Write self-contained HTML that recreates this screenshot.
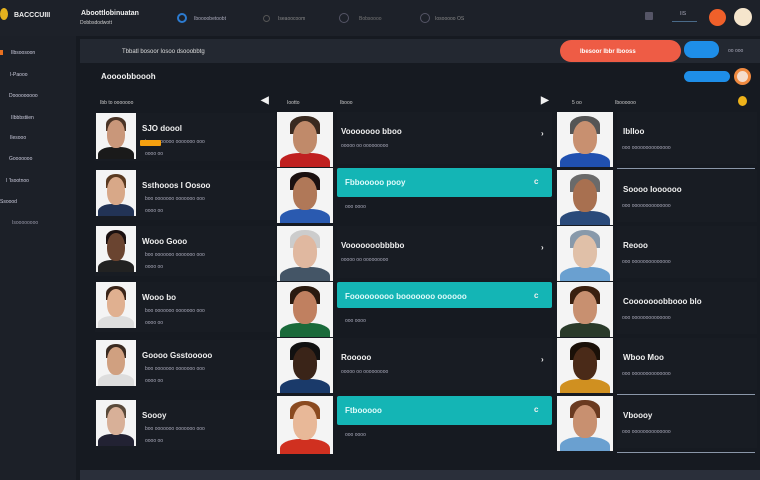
<!DOCTYPE html>
<html><head><style>
*{margin:0;padding:0;box-sizing:border-box}
body{width:760px;height:480px;overflow:hidden;background:#161a21;font-family:"Liberation Sans",sans-serif;color:#e8ecf0;position:relative}
.a{position:absolute}
.t{position:absolute;font-size:8px;font-weight:bold;color:#f0f0f0;white-space:nowrap}
.s{position:absolute;font-size:5px;color:#aab;white-space:nowrap}
.ph{position:absolute;background:#f4f4f4;overflow:hidden}
.ph .h{position:absolute;border-radius:50% 50% 45% 45%;background:#c9977a}
.ph .hr{position:absolute;border-radius:50% 50% 0 0;background:#4a3426}
.ph .b{position:absolute;border-radius:40% 40% 0 0}
.row{position:absolute;background:#181c23}
.teal{position:absolute;background:#14b5b5;border-radius:2px}
</style></head><body>
<div class="a" style="left:0;top:0;width:760px;height:36px;background:#1d2129"></div>
<div class="a" style="left:0;top:8px;width:8px;height:12px;border-radius:50%;background:#e5b21e"></div>
<div class="t" style="left:14px;top:12px;font-size:7px">BACCCUIII</div>
<div class="t" style="left:81px;top:10px;font-size:7px">Aboottlobinuatan</div>
<div class="s" style="left:80px;top:20px;color:#ccc">Dobbsdodwott</div>
<div class="a" style="left:177px;top:13px;width:10px;height:10px;border-radius:50%;border:2px solid #2c7bd0"></div>
<div class="s" style="left:194px;top:16px">Iboooobetoobt</div>
<div class="a" style="left:263px;top:15px;width:7px;height:7px;border-radius:50%;border:1px solid #555"></div>
<div class="s" style="left:278px;top:16px;color:#888">Iseaoocoom</div>
<div class="a" style="left:339px;top:13px;width:10px;height:10px;border-radius:50%;border:1px solid #556"></div>
<div class="s" style="left:359px;top:16px;color:#777">Bobsoooo</div>
<div class="a" style="left:420px;top:13px;width:10px;height:10px;border-radius:50%;border:1px solid #556"></div>
<div class="s" style="left:435px;top:16px;color:#888">Iosooooo OS</div>
<div class="a" style="left:645px;top:12px;width:8px;height:8px;background:#556;border-radius:1px"></div>
<div class="s" style="left:680px;top:11px">IIS</div>
<div class="a" style="left:672px;top:21px;width:25px;height:1px;background:#4a6a88"></div>
<div class="a" style="left:709px;top:9px;width:17px;height:17px;border-radius:50%;background:#f0602a"></div>
<div class="a" style="left:734px;top:8px;width:18px;height:18px;border-radius:50%;background:#f5e5cc"></div>
<div class="a" style="left:0;top:36px;width:76px;height:444px;background:#1c2028"></div>
<div class="s" style="left:11px;top:50px;color:#ccd">Ilbsoosoon</div>
<div class="a" style="left:0;top:50px;width:3px;height:5px;background:#e87020"></div>
<div class="s" style="left:10px;top:72px;color:#ccd">I-Paooo</div>
<div class="s" style="left:9px;top:93px;color:#ccd">Dooooooooo</div>
<div class="s" style="left:11px;top:115px;color:#ccd">IIbbbstiien</div>
<div class="s" style="left:10px;top:135px;color:#ccd">Ilesooo</div>
<div class="s" style="left:9px;top:156px;color:#ccd">Gooooooo</div>
<div class="s" style="left:6px;top:178px;color:#ccd">I 'Isootnoo</div>
<div class="s" style="left:0;top:199px;color:#ccd">Ssoood</div>
<div class="s" style="left:12px;top:220px;color:#99a">Isoooooooo</div>
<div class="a" style="left:80px;top:39px;width:680px;height:24px;background:#232831"></div>
<div class="s" style="left:122px;top:49px;color:#ddd;font-size:6px">Tbbatl bosoor Iosoo dsooobbtg</div>
<div class="a" style="left:560px;top:40px;width:121px;height:22px;border-radius:11px;background:#ee5c45"></div>
<div class="s" style="left:580px;top:49px;color:#fff;font-size:6px;font-weight:bold">Ibesoor Ibbr Ibooss</div>
<div class="a" style="left:684px;top:41px;width:35px;height:17px;border-radius:8px;background:#1e8ee8"></div>
<div class="s" style="left:728px;top:48px">oo ooo</div>
<div class="a" style="left:684px;top:71px;width:46px;height:11px;border-radius:6px;background:#1e8ee8"></div>
<div class="a" style="left:734px;top:68px;width:17px;height:17px;border-radius:50%;background:#f5dccc;border:3px solid #f08a40"></div>
<div class="t" style="left:101px;top:72px">Aoooobboooh</div>
<div class="s" style="left:100px;top:100px;color:#ccc">Ibb to ooooooo</div>
<div class="t" style="left:261px;top:95px;font-size:10px">◀</div>
<div class="s" style="left:287px;top:100px;color:#ccc">Iootto</div>
<div class="s" style="left:340px;top:100px;color:#ccc">Ibooo</div>
<div class="t" style="left:541px;top:95px;font-size:10px">▶</div>
<div class="s" style="left:572px;top:100px;color:#ccc">5 oo</div>
<div class="s" style="left:615px;top:100px;color:#ccc">Iboooooo</div>
<div class="a" style="left:738px;top:96px;width:9px;height:10px;border-radius:50%;background:#eeb21a"></div>
<div class="a" style="left:80px;top:470px;width:680px;height:10px;background:#2a2f3a"></div>
<script>
function face(x,y,w,h,skin,hair,shirt){
 return `<div class="ph" style="left:${x}px;top:${y}px;width:${w}px;height:${h}px">
 <div class="b" style="left:${w*0.05}px;top:${h*0.74}px;width:${w*0.9}px;height:${h*0.4}px;background:${shirt}"></div>
 <div class="hr" style="left:${w*0.24}px;top:${h*0.08}px;width:${w*0.52}px;height:${h*0.32}px;background:${hair}"></div>
 <div class="h" style="left:${w*0.28}px;top:${h*0.16}px;width:${w*0.44}px;height:${h*0.6}px;background:${skin}"></div></div>`;
}
let o='';
const c1=[113,170,226,282,340,400], ti1=['SJO doool','Ssthooos I Oosoo','Wooo Gooo','Wooo bo','Goooo Gsstooooo','Soooy'];
const sk=['#c9977a','#d8a888','#6a4430','#e0b090','#d0a080','#d8b098'], hr=['#4a3426','#5a3a20','#1a1010','#3a2418','#3a2a20','#5a4a3a'], sh=['#1a1a1a','#223355','#222','#ddd','#ddd','#223'];
c1.forEach((y,i)=>{o+=`<div class="row" style="left:95px;top:${y}px;width:180px;height:${i==0?48:50}px"></div>`+face(96,y,40,46,sk[i],hr[i],sh[i])+
`<div class="t" style="left:142px;top:${y+11}px">${ti1[i]}</div><div class="s" style="left:145px;top:${y+26}px">boo ooooooo ooooooo ooo</div><div class="s" style="left:145px;top:${y+38}px">oooo oo</div>`;});
o+=`<div class="a" style="left:140px;top:140px;width:21px;height:6px;background:#f5a010;border-radius:1px"></div>`;
const c2=[112,168,226,282,338,396], ti2=['Vooooooo bboo','Fbbooooo pooy','Vooooooobbbbo','Fooooooooo booooooo oooooo','Rooooo','Ftbooooo'];
const sk2=['#c08a6a','#b07858','#e0b8a0','#c08060','#3a2418','#e8b898'], hr2=['#3a2a20','#1a1010','#ccc','#2a1a10','#111','#8a4a20'],sh2=['#c02020','#2a5ab0','#445566','#1a6a3a','#1a3a6a','#d03020'];
c2.forEach((y,i)=>{const teal=i%2==1; o+=face(277,y,56,i==5?58:55,sk2[i],hr2[i],sh2[i]);
 if(teal){o+=`<div class="teal" style="left:337px;top:${y}px;width:215px;height:${i==3?26:29}px"></div><div class="t" style="left:345px;top:${y+10}px;color:#e0fbfb">${ti2[i]}</div><div class="t" style="left:534px;top:${y+9}px">c</div><div class="s" style="left:345px;top:${y+36}px">ooo oooo</div>`;}
 else{o+=`<div class="row" style="left:337px;top:${y}px;width:215px;height:52px"></div><div class="t" style="left:341px;top:${y+15}px">${ti2[i]}</div><div class="s" style="left:341px;top:${y+31}px">ooooo oo ooooooooo</div><div class="t" style="left:541px;top:${y+17}px">›</div>`;}});
const c3=[112,170,226,282,338,396], ti3=['Iblloo','Soooo Ioooooo','Reooo','Cooooooobbooo blo','Wboo Moo','Vboooy'];
const sk3=['#c89070','#a87050','#e0c0a8','#c89070','#4a2a18','#c89070'],hr3=['#555','#6a6a6a','#8899aa','#3a2010','#1a1008','#6a3a20'],sh3=['#2050b0','#2a4a7a','#6aa0d0','#2a3a2a','#d09020','#6aa0d0'];
c3.forEach((y,i)=>{o+=face(557,y,56,55,sk3[i],hr3[i],sh3[i])+`<div class="row" style="left:617px;top:${y}px;width:140px;height:52px"></div><div class="a" style="left:617px;top:${y+56}px;width:138px;height:1px;background:#8a96a8"></div><div class="t" style="left:623px;top:${y+15}px">${ti3[i]}</div><div class="s" style="left:622px;top:${y+33}px">ooo oooooooooooooo</div>`;});
document.write(o);
</script>
</body></html>
